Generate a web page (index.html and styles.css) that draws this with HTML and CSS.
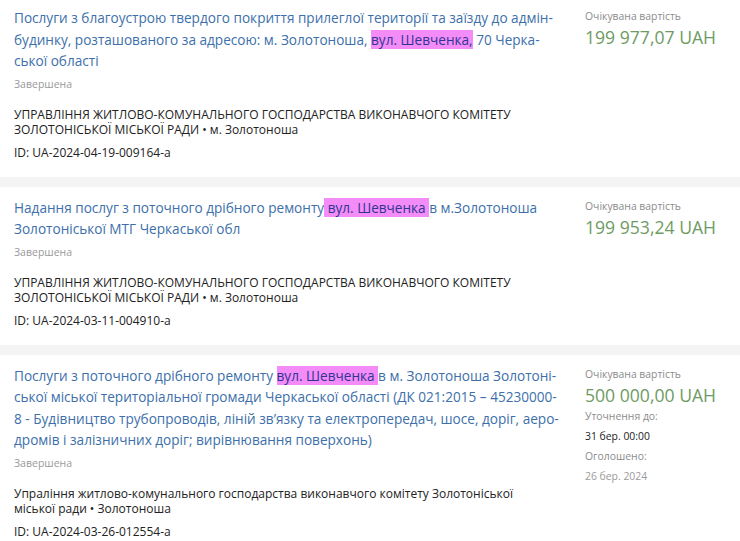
FILE: index.html
```html
<!DOCTYPE html>
<html lang="uk">
  <head>
    <meta charset="UTF-8" />
    <meta name="viewport" content="width=device-width, initial-scale=1.0" />
    <title>Пошук закупівель</title>
    <link rel="stylesheet" href="styles.css">
  </head>
  <body>
    <section class="results">

      <div class="tender">
        <div class="tender-main">
          <a class="tender-title" href="#">Послуги з благоустрою твердого покриття прилеглої території та заїзду до адмін&shy;будинку, розташованого за адресою: м. Золотоноша, <mark>вул. Шевченка,</mark> 70 Черка&shy;ської області</a>
          <div class="status">Завершена</div>
          <div class="org">УПРАВЛІННЯ ЖИТЛОВО-КОМУНАЛЬНОГО ГОСПОДАРСТВА ВИКОНАВЧОГО КОМІТЕТУ ЗОЛОТОНІСЬКОЇ МІСЬКОЇ РАДИ • м. Золотоноша</div>
          <div class="tender-id">ID: UA-2024-04-19-009164-a</div>
        </div>
        <div class="tender-side">
          <div class="label">Очікувана вартість</div>
          <div class="price">199 977,07 UAH</div>
        </div>
      </div>

      <div class="tender">
        <div class="tender-main">
          <a class="tender-title" href="#">Надання послуг з поточного дрібного ремонту<mark> вул. Шевченка </mark>в м.Золотоноша Золотоніської МТГ Черкаської обл</a>
          <div class="status">Завершена</div>
          <div class="org">УПРАВЛІННЯ ЖИТЛОВО-КОМУНАЛЬНОГО ГОСПОДАРСТВА ВИКОНАВЧОГО КОМІТЕТУ ЗОЛОТОНІСЬКОЇ МІСЬКОЇ РАДИ • м. Золотоноша</div>
          <div class="tender-id">ID: UA-2024-03-11-004910-a</div>
        </div>
        <div class="tender-side">
          <div class="label">Очікувана вартість</div>
          <div class="price">199 953,24 UAH</div>
        </div>
      </div>

      <div class="tender">
        <div class="tender-main">
          <a class="tender-title" href="#">Послуги з поточного дрібного ремонту <mark>вул. Шевченка </mark>в м. Золотоноша Золотоні&shy;ської міської територіальної громади Черкаської області (ДК 021:2015 – 45230000-8 - Будівництво трубопроводів, ліній зв’язку та електропередач, шосе, доріг, аеро&shy;дромів і залізничних доріг; вирівнювання поверхонь)</a>
          <div class="status">Завершена</div>
          <div class="org">Упраління житлово-комунального господарства виконавчого комітету Золотоніської міської ради • Золотоноша</div>
          <div class="tender-id">ID: UA-2024-03-26-012554-a</div>
        </div>
        <div class="tender-side">
          <div class="label">Очікувана вартість</div>
          <div class="price">500 000,00 UAH</div>
          <div class="label">Уточнення до:</div>
          <div class="date">31 бер. 00:00</div>
          <div class="label">Оголошено:</div>
          <div class="date muted">26 бер. 2024</div>
        </div>
      </div>

    </section>
  </body>
</html>
```

FILE: styles.css
```css
* {
  margin: 0;
  padding: 0;
  box-sizing: border-box;
}

body {
  font-family: "Open Sans", "Noto Sans", sans-serif;
  background: #f4f4f5;
  color: #333;
}

.results {
  display: flex;
  flex-direction: column;
  gap: 10px;
  margin-top: -3px;
}

.tender {
  display: flex;
  gap: 24px;
  background: #fff;
  padding: 10px 14px 16px 14px;
}

.tender-main {
  width: 547px;
  flex-shrink: 0;
}

.tender-title {
  display: block;
  font-size: 13.6px;
  line-height: 21.5px;
  color: #3d6faa;
  text-decoration: none;
  hyphens: manual;
}

.tender-title mark {
  background: #f48cf8;
  color: #2f3592;
}

.status {
  margin-top: 4px;
  font-size: 10.5px;
  line-height: 16px;
  color: #9a9a9a;
}

.org {
  margin-top: 15px;
  font-size: 12px;
  line-height: 15.5px;
  color: #222;
  padding-right: 30px;
}

.tender-id {
  margin-top: 7px;
  font-size: 12px;
  line-height: 16px;
  color: #222;
}

.tender-side {
  flex: 1;
}

.label {
  font-size: 10.4px;
  line-height: 18px;
  color: #8c8c8c;
}

.price {
  font-size: 17.6px;
  line-height: 24px;
  color: #6e9b63;
}

.date {
  font-size: 10.4px;
  line-height: 22px;
  color: #222;
}

.date.muted {
  color: #9a9a9a;
}
```
